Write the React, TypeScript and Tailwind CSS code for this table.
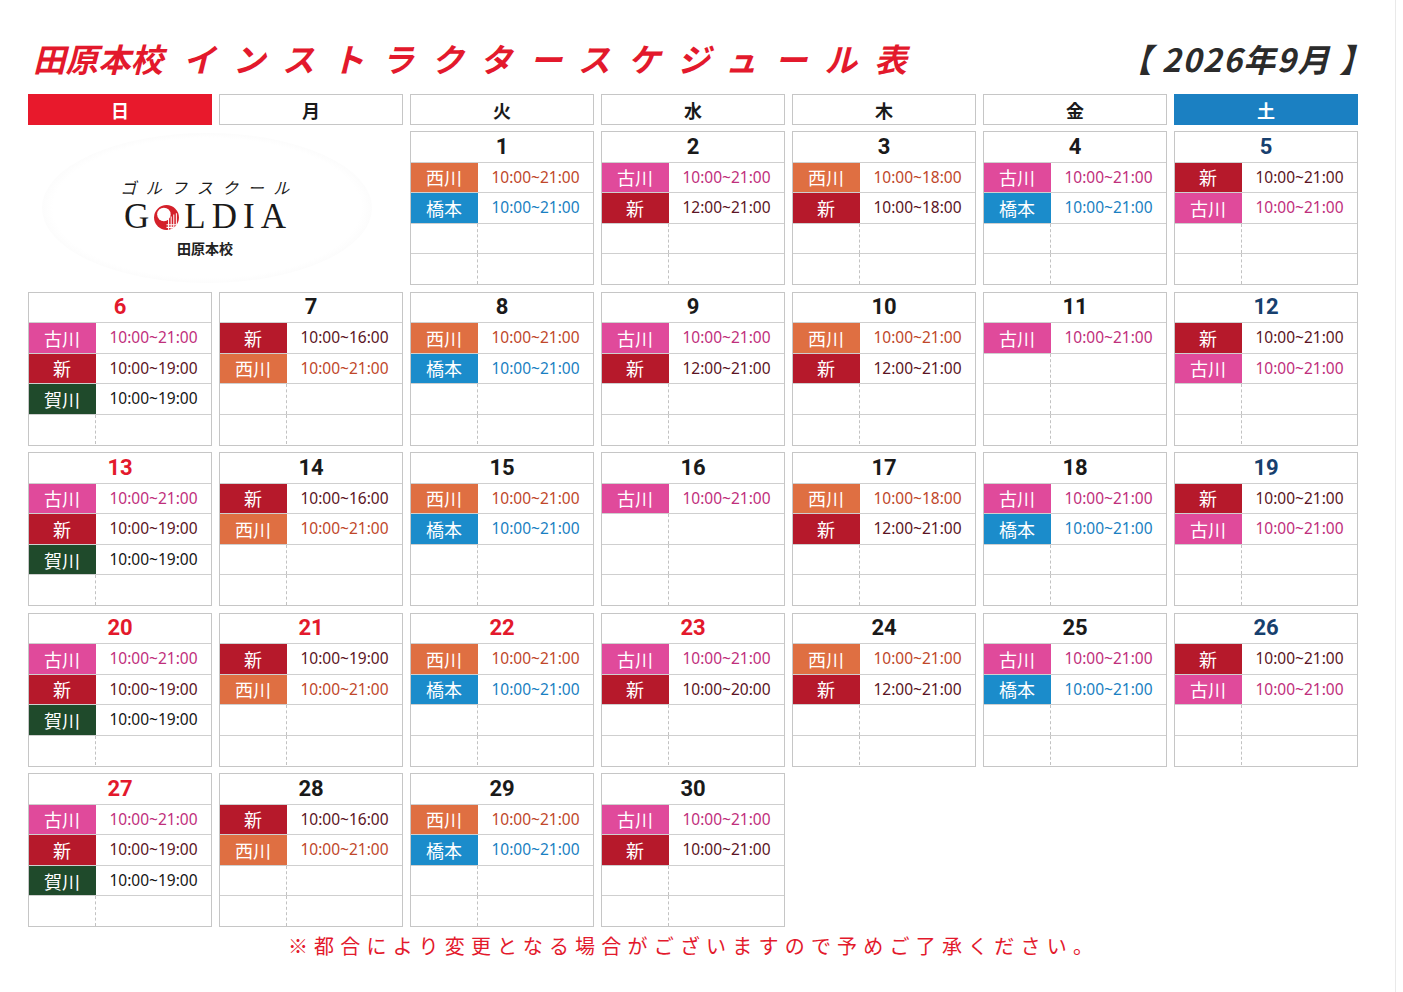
import React from "react";

type Shift = [string, string];
type Day = { d: number; s: Shift[] } | null;

const STYLE: Record<string, { bg: string; text: string }> = {
  西川: { bg: "bg-[#df6f42]", text: "text-[#c0472a]" },
  橋本: { bg: "bg-[#1b8ccb]", text: "text-[#1a7fc2]" },
  古川: { bg: "bg-[#e04a9b]", text: "text-[#bf2f7c]" },
  新: { bg: "bg-[#b6192b]", text: "text-[#5b1424]" },
  賀川: { bg: "bg-[#1f4a2b]", text: "text-[#151515]" },
};

const weeks: Day[][] = [
  [
    null,
    null,
    { d: 1, s: [["西川", "10:00~21:00"], ["橋本", "10:00~21:00"]] },
    { d: 2, s: [["古川", "10:00~21:00"], ["新", "12:00~21:00"]] },
    { d: 3, s: [["西川", "10:00~18:00"], ["新", "10:00~18:00"]] },
    { d: 4, s: [["古川", "10:00~21:00"], ["橋本", "10:00~21:00"]] },
    { d: 5, s: [["新", "10:00~21:00"], ["古川", "10:00~21:00"]] },
  ],
  [
    { d: 6, s: [["古川", "10:00~21:00"], ["新", "10:00~19:00"], ["賀川", "10:00~19:00"]] },
    { d: 7, s: [["新", "10:00~16:00"], ["西川", "10:00~21:00"]] },
    { d: 8, s: [["西川", "10:00~21:00"], ["橋本", "10:00~21:00"]] },
    { d: 9, s: [["古川", "10:00~21:00"], ["新", "12:00~21:00"]] },
    { d: 10, s: [["西川", "10:00~21:00"], ["新", "12:00~21:00"]] },
    { d: 11, s: [["古川", "10:00~21:00"]] },
    { d: 12, s: [["新", "10:00~21:00"], ["古川", "10:00~21:00"]] },
  ],
  [
    { d: 13, s: [["古川", "10:00~21:00"], ["新", "10:00~19:00"], ["賀川", "10:00~19:00"]] },
    { d: 14, s: [["新", "10:00~16:00"], ["西川", "10:00~21:00"]] },
    { d: 15, s: [["西川", "10:00~21:00"], ["橋本", "10:00~21:00"]] },
    { d: 16, s: [["古川", "10:00~21:00"]] },
    { d: 17, s: [["西川", "10:00~18:00"], ["新", "12:00~21:00"]] },
    { d: 18, s: [["古川", "10:00~21:00"], ["橋本", "10:00~21:00"]] },
    { d: 19, s: [["新", "10:00~21:00"], ["古川", "10:00~21:00"]] },
  ],
  [
    { d: 20, s: [["古川", "10:00~21:00"], ["新", "10:00~19:00"], ["賀川", "10:00~19:00"]] },
    { d: 21, s: [["新", "10:00~19:00"], ["西川", "10:00~21:00"]] },
    { d: 22, s: [["西川", "10:00~21:00"], ["橋本", "10:00~21:00"]] },
    { d: 23, s: [["古川", "10:00~21:00"], ["新", "10:00~20:00"]] },
    { d: 24, s: [["西川", "10:00~21:00"], ["新", "12:00~21:00"]] },
    { d: 25, s: [["古川", "10:00~21:00"], ["橋本", "10:00~21:00"]] },
    { d: 26, s: [["新", "10:00~21:00"], ["古川", "10:00~21:00"]] },
  ],
  [
    { d: 27, s: [["古川", "10:00~21:00"], ["新", "10:00~19:00"], ["賀川", "10:00~19:00"]] },
    { d: 28, s: [["新", "10:00~16:00"], ["西川", "10:00~21:00"]] },
    { d: 29, s: [["西川", "10:00~21:00"], ["橋本", "10:00~21:00"]] },
    { d: 30, s: [["古川", "10:00~21:00"], ["新", "10:00~21:00"]] },
    null,
    null,
    null,
  ],
];

const RED = [6, 13, 20, 27, 21, 22, 23];
const BLUE = [5, 12, 19, 26];

function dateColor(d: number) {
  if (RED.includes(d)) return "text-[#e3192c]";
  if (BLUE.includes(d)) return "text-[#17406e]";
  return "text-[#1a1a1a]";
}

function Ball() {
  return (
    <svg width="27" height="27" viewBox="0 0 26 26" className="mx-[4px] translate-y-[1px]">
      <defs>
        <clipPath id="bc">
          <circle cx="13" cy="13" r="12" />
        </clipPath>
      </defs>
      <circle cx="13" cy="13" r="12" fill="#d4202a" />
      <g clipPath="url(#bc)" stroke="#fff" strokeWidth="1">
        <circle cx="10.5" cy="10" r="6.5" fill="#fff" stroke="none" />
        <line x1="15" y1="14" x2="15" y2="25" />
        <line x1="17.5" y1="12" x2="17.5" y2="25" />
        <line x1="20" y1="10" x2="20" y2="25" />
        <line x1="22.5" y1="9" x2="22.5" y2="25" />
        <line x1="13" y1="20" x2="25" y2="20" />
        <line x1="13" y1="22.5" x2="25" y2="22.5" />
      </g>
    </svg>
  );
}

function Logo() {
  return (
    <div className="col-span-2 h-[154px] flex items-center justify-start">
      <div className="ml-[14px] w-[330px] h-[150px] rounded-[50%] bg-[radial-gradient(ellipse_at_center,#ffffff_66%,#fafafa_74%,#ffffff_82%)] flex flex-col items-center justify-center pt-[18px] pr-[4px]">
        <div className="italic text-[16px] leading-[16px] tracking-[9.5px] text-[#1a1a1a] pl-[9px] font-['Noto_Sans_CJK_JP',sans-serif]">
          ゴルフスクール
        </div>
        <div className="flex items-center font-['Liberation_Serif',serif] text-[35px] leading-[26px] text-[#1a1a1a] mt-[8px]">
          <span>G</span>
          <Ball />
          <span className="tracking-[6px] mr-[-6px]">LDIA</span>
        </div>
        <div className="mt-[11px] font-bold text-[14px] leading-none text-[#222] font-['Noto_Sans_CJK_JP',sans-serif]">
          田原本校
        </div>
      </div>
    </div>
  );
}

function Row({ shift }: { shift?: Shift }) {
  const st = shift ? STYLE[shift[0]] : null;
  return (
    <div className="flex-1 flex border-t border-[#cfcfcf] min-h-0">
      <div
        className={
          "w-[67px] flex items-center justify-center border-r border-dashed " +
          (st ? st.bg + " border-transparent" : "border-[#c2c2c2]")
        }
      >
        {shift && (
          <span className="text-white text-[18px] leading-none font-['Noto_Sans_CJK_JP',sans-serif]">
            {shift[0]}
          </span>
        )}
      </div>
      <div className="flex-1 flex items-center justify-center">
        {shift && st && (
          <span className={"text-[15.5px] leading-none font-['Noto_Sans','Noto_Sans_CJK_JP',sans-serif] " + st.text}>
            {shift[1]}
          </span>
        )}
      </div>
    </div>
  );
}

function Cell({ day }: { day: { d: number; s: Shift[] } }) {
  return (
    <div className="h-[154px] border border-[#c6c6c6] flex flex-col bg-white">
      <div className="flex-1 flex items-center justify-center">
        <span className={"font-['Roboto',sans-serif] font-bold text-[22px] leading-none " + dateColor(day.d)}>
          {day.d}
        </span>
      </div>
      {[0, 1, 2, 3].map((i) => (
        <Row key={i} shift={day.s[i]} />
      ))}
    </div>
  );
}

const HEAD = ["日", "月", "火", "水", "木", "金", "土"];

export default function App() {
  return (
    <div className="w-[1396px] h-[992px] bg-white border-r border-[#e9e9e9] pl-[28px] font-['Noto_Sans_CJK_JP','Noto_Sans',sans-serif] text-[#1a1a1a]">
      <div className="w-[1331px]">
        <div className="pt-[38px] h-[94px] flex items-start justify-between">
          <div className="flex items-center italic font-bold text-[#e3192c] text-[32.5px] leading-[40px] pl-[5px]">
            <span>田原本校</span>
            <span className="ml-[20px] tracking-[17.3px]">インストラクタースケジュール表</span>
          </div>
          <div className="italic font-bold text-[32px] leading-[40px] text-[#2b2b2b] tracking-[1.5px] whitespace-pre mr-[-14px]">
            【 2026年9月 】
          </div>
        </div>
        <div className="grid grid-cols-[repeat(7,184px)] gap-x-[7px] h-[31px]">
          {HEAD.map((h, i) => (
            <div
              key={h}
              className={
                "flex items-center justify-center font-bold text-[18px] leading-none " +
                (i === 0
                  ? "bg-[#e8192c] text-white"
                  : i === 6
                  ? "bg-[#1b80c2] text-white"
                  : "border border-[#c6c6c6] text-[#1a1a1a]")
              }
            >
              {h}
            </div>
          ))}
        </div>
        <div className="mt-[6px] grid grid-cols-[repeat(7,184px)] gap-x-[7px] gap-y-[6.5px]">
          {weeks.map((w, wi) =>
            w.map((day, di) => {
              if (wi === 0 && di === 0) return <Logo key="logo" />;
              if (wi === 0 && di === 1) return null;
              if (!day) return <div key={`e${wi}-${di}`} className="h-[154px]" />;
              return <Cell key={day.d} day={day} />;
            })
          )}
        </div>
        <div className="mt-[7px] text-center text-[#e3192c] text-[20px] leading-[24px] tracking-[6.2px]">
          ※都合により変更となる場合がございますので予めご了承ください。
        </div>
      </div>
    </div>
  );
}
